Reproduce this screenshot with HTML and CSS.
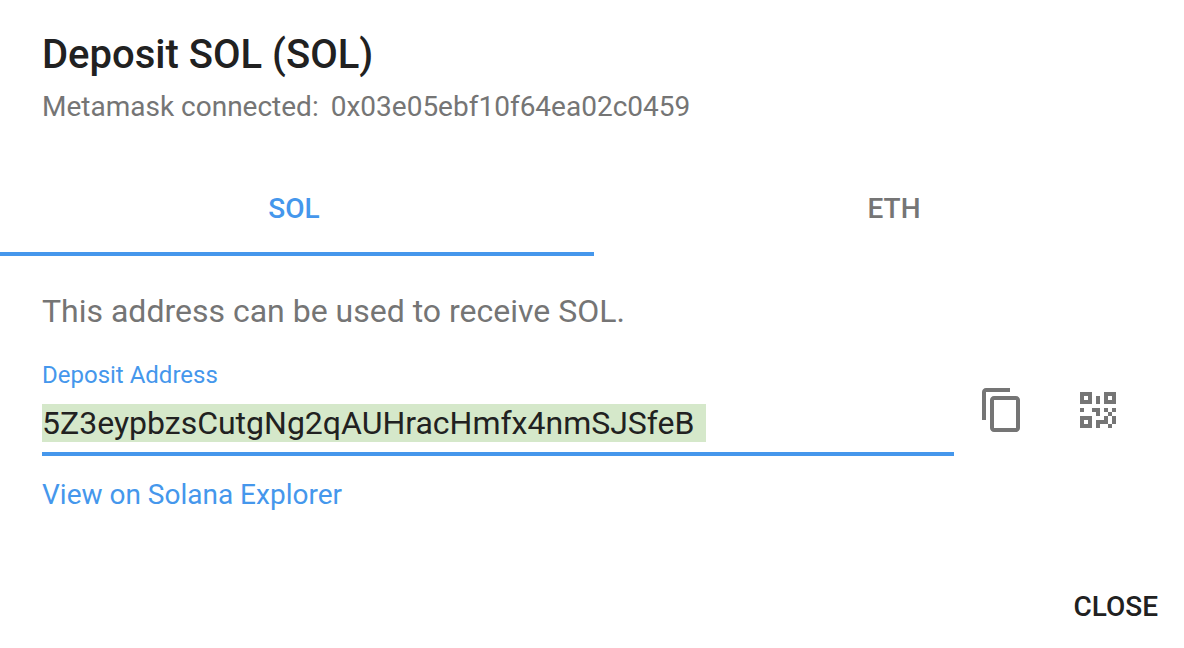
FILE: index.html
```html
<!DOCTYPE html>
<html lang="en">
<head>
<meta charset="utf-8">
<title>Deposit SOL</title>
<link rel="stylesheet" href="styles.css">
</head>
<body>
<main class="dialog">
  <header class="dialog-header">
    <h1 class="title">Deposit SOL (SOL)</h1>
    <p class="subtitle">Metamask connected: <span class="wallet">0x03e05ebf10f64ea02c04593</span></p>
  </header>
  <div class="tabs" role="tablist">
    <button class="tab tab-active" role="tab" aria-selected="true">SOL</button>
    <button class="tab" role="tab" aria-selected="false">ETH</button>
  </div>
  <section class="content">
    <p class="hint">This address can be used to receive SOL.</p>
    <div class="row">
      <div class="field">
        <label class="label" for="address">Deposit Address</label>
        <div class="control"><input class="input" id="address" type="text" readonly value="5Z3eypbzsCutgNg2qAUHracHmfx4nmSJSfeB"></div>
      </div>
      <div class="actions">
        <button class="icon-button" aria-label="Copy address">
          <svg class="icon" viewBox="0 0 24 24"><path d="M16 1H4c-1.100 0-2 .9-2 2v14h2V3h12V1zm3 4H8c-1.100 0-2 .9-2 2v14c0 1.100.9 2 2 2h11c1.100 0 2-.9 2-2V7c0-1.100-.9-2-2-2zm0 16H8V7h11v14z"/></svg>
        </button>
        <button class="icon-button" aria-label="Show QR code">
          <svg class="icon" viewBox="0 0 24 24" shape-rendering="crispEdges"><path fill-rule="evenodd" d="M3 3h6v6H3zM5 5v2h2V5zM15 3h6v6h-6zM17 5v2h2V5zM3 15h6v6H3zM5 17v2h2v-2zM11 5h2v4h-2zM3 11h2v2H3zM9 11h4v4h-2v-2H9zM15 11h2v2h-2zM19 11h2v2h-2zM17 13h2v2h-2zM15 15h2v4h-4v2h-2v-4h4zM19 15h2v4h-2zM17 19h2v2h-2z"/></svg>
        </button>
      </div>
    </div>
    <a class="link" href="#">View on Solana Explorer</a>
  </section>
  <footer class="footer"><button class="close">CLOSE</button></footer>
</main>
</body>
</html>
```
FILE: styles.css
```css
* { box-sizing: border-box; }
body { margin: 0; overflow-x: hidden; background: #fff; color: #212121; font-family: Roboto, sans-serif; }
button { border: 0; background: none; font-family: inherit; cursor: pointer; }
h1, p { margin: 0; }
/* The dialog bleeds past both window edges. */
.dialog { display: flex; flex-direction: column; min-height: 100vh; margin: 0 -10px 0 -6px; }
.dialog-header { padding: 32px 48px 0; }
.title { font-size: 40px; line-height: 46px; font-weight: 500; }
.subtitle { display: flex; gap: 12px; margin-top: 12px; color: #757575; font-size: 28px; line-height: 34px; white-space: nowrap; }
.wallet { width: 360px; overflow: hidden; }
.tabs { display: flex; margin-top: 32px; }
.tab { flex: 1; height: 100px; padding: 8px 0 0; border-bottom: 4px solid transparent; color: #757575; font-size: 28px; font-weight: 500; }
.tab-active { color: #4597ec; border-bottom-color: #4597ec; }
.content { padding: 36px 48px 0; }
.hint { color: #757575; font-size: 32px; line-height: 38px; }
.row { display: flex; margin-top: 30px; }
.field { flex: 1; }
.label { display: block; color: #4597ec; font-size: 24px; line-height: 30px; }
.control { margin-top: 14px; padding-bottom: 10px; border-bottom: 4px solid #4597ec; }
.input { display: block; border: 0; padding: 0; width: 664px; height: 38px; background: #d5e8ca; color: #212121; font: 32px Roboto, sans-serif; outline: 0; }
.actions { display: flex; align-items: center; padding-top: 2px; }
.icon-button { width: 96px; height: 96px; padding: 24px; }
.icon { display: block; width: 48px; height: 48px; fill: #757575; }
.link { display: inline-block; margin-top: 20px; color: #4597ec; font-size: 28px; line-height: 34px; text-decoration: none; }
.footer { display: flex; justify-content: flex-end; margin-top: auto; padding: 0 36px 24px; }
.close { padding: 0; color: #212121; font-size: 28px; line-height: 34px; font-weight: 500; }
```
